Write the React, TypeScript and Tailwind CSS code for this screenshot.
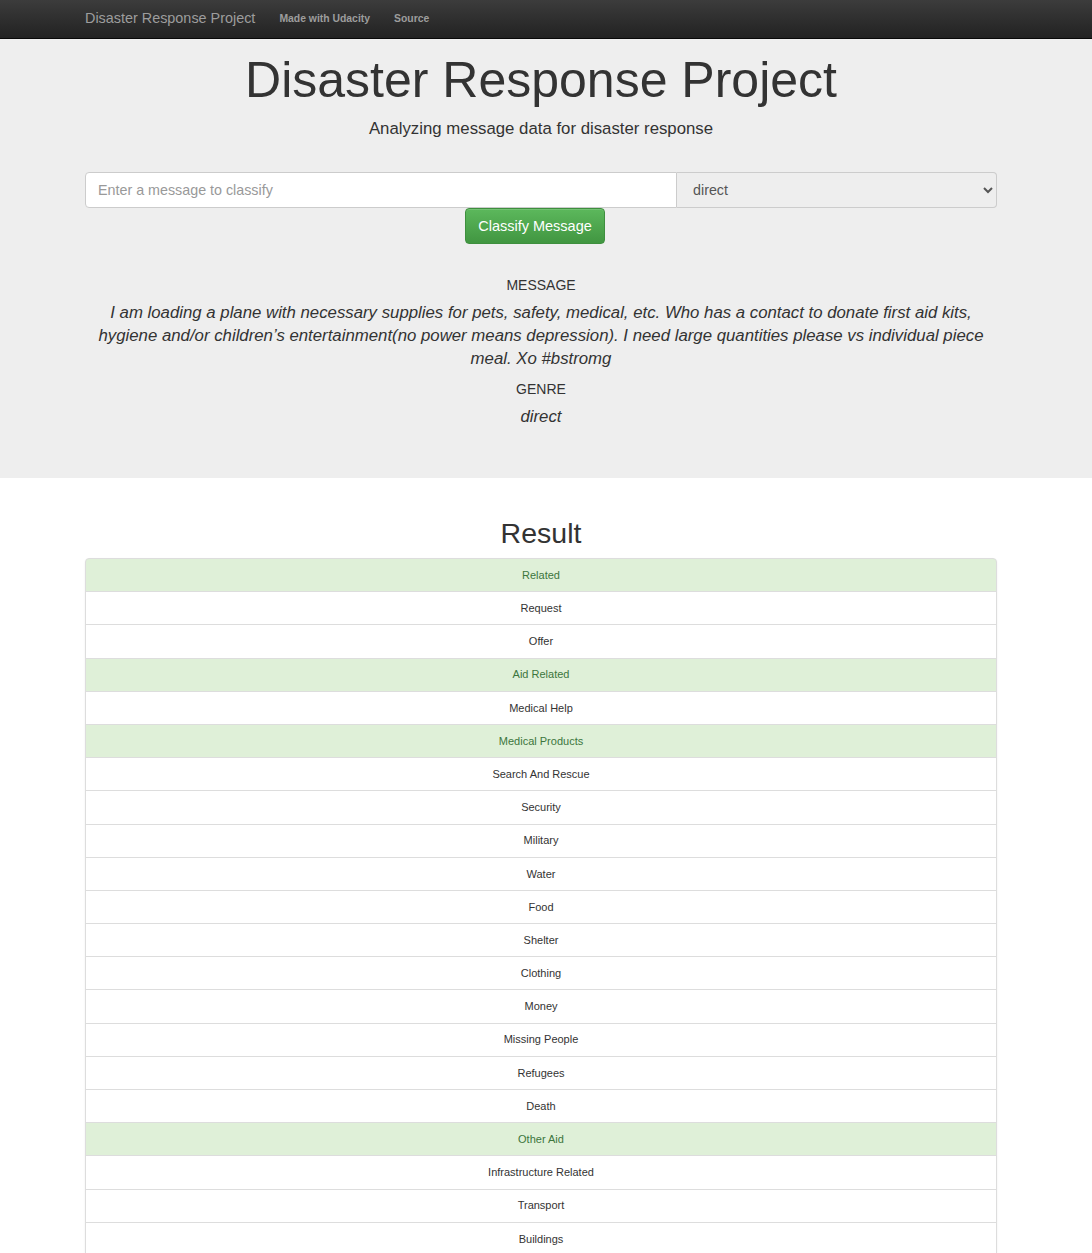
import React from 'react';

const categories: { name: string; hit: boolean }[] = [
  { name: 'Related', hit: true },
  { name: 'Request', hit: false },
  { name: 'Offer', hit: false },
  { name: 'Aid Related', hit: true },
  { name: 'Medical Help', hit: false },
  { name: 'Medical Products', hit: true },
  { name: 'Search And Rescue', hit: false },
  { name: 'Security', hit: false },
  { name: 'Military', hit: false },
  { name: 'Water', hit: false },
  { name: 'Food', hit: false },
  { name: 'Shelter', hit: false },
  { name: 'Clothing', hit: false },
  { name: 'Money', hit: false },
  { name: 'Missing People', hit: false },
  { name: 'Refugees', hit: false },
  { name: 'Death', hit: false },
  { name: 'Other Aid', hit: true },
  { name: 'Infrastructure Related', hit: false },
  { name: 'Transport', hit: false },
  { name: 'Buildings', hit: false },
];

const message =
  'I am loading a plane with necessary supplies for pets, safety, medical, etc. Who has a contact to donate first aid kits, hygiene and/or children\u2019s entertainment(no power means depression). I need large quantities please vs individual piece meal. Xo #bstromg';

const App: React.FC = () => {
  return (
    <div className="min-h-[1253px] bg-white text-[#333] font-['Liberation_Sans',Arial,sans-serif]">
      {/* navbar */}
      <nav className="h-[39px] bg-gradient-to-b from-[#3c3c3c] to-[#222] border-b border-[#080808]">
        <div className="w-[912px] ml-[85px] flex items-center h-[38px]">
          <span className="text-[14.4px] text-[#9d9d9d]">Disaster Response Project</span>
          <span className="ml-6 text-[10.4px] font-bold text-[#9d9d9d]">Made with Udacity</span>
          <span className="ml-6 text-[10.4px] font-bold text-[#9d9d9d]">Source</span>
        </div>
      </nav>

      {/* jumbotron */}
      <section className="bg-[#eee] h-[439px]">
        <div className="w-[912px] ml-[85px] pt-[10px] flex flex-col items-center">
          <h1 className="text-[50px] leading-[62px] text-[#333]">Disaster Response Project</h1>
          <p className="mt-[6px] text-[16.8px] leading-[24px] text-[#333]">
            Analyzing message data for disaster response
          </p>

          <form className="mt-[31px] w-full flex flex-col items-center">
            <div className="w-full flex h-[36px]">
              <input
                type="text"
                placeholder="Enter a message to classify"
                className="flex-1 h-full bg-white border border-[#ccc] rounded-l-[4px] px-3 text-[14.3px] text-[#555] placeholder:text-[#999] outline-none"
              />
              <select
                defaultValue="direct"
                className="w-[320px] h-full bg-[#eee] border border-l-0 border-[#ccc] rounded-r-[4px] pl-[12px] pr-2 text-[14.3px] text-[#555] outline-none"
              >
                <option value="direct">direct</option>
                <option value="news">news</option>
                <option value="social">social</option>
              </select>
            </div>
            <button
              type="button"
              className="mr-[12px] h-[36px] px-[12px] rounded-[4px] border border-[#3e8f3e] bg-gradient-to-b from-[#5cb85c] to-[#419641] text-white text-[14.5px] leading-none shadow-[inset_0_1px_0_rgba(255,255,255,0.15)]"
            >
              Classify Message
            </button>
          </form>

          <div className="mt-[31px] flex flex-col items-center text-center">
            <div className="text-[14px] leading-[20px] text-[#333]">MESSAGE</div>
            <p className="mt-[6px] w-[900px] text-[16.8px] leading-[23px] italic text-[#333]">{message}</p>
            <div className="mt-[9px] text-[14px] leading-[20px] text-[#333]">GENRE</div>
            <p className="mt-[6px] text-[16.8px] leading-[23px] italic text-[#333]">direct</p>
          </div>
        </div>
      </section>

      {/* result */}
      <section className="w-[912px] ml-[85px] pt-[35px]">
        <h2 className="text-center text-[28.5px] leading-[40px] text-[#333]">Result</h2>
        <ul className="mt-[5px] rounded-[4px] shadow-[0_1px_2px_rgba(0,0,0,0.075)]">
          {categories.map((c, i) => (
            <li
              key={c.name}
              className={
                'h-[34.2px] -mb-px flex items-center justify-center border border-[#ddd] text-[11px] ' +
                (c.hit ? 'bg-[#dff0d8] text-[#3c763d] ' : 'bg-white text-[#333] ') +
                (i === 0 ? 'rounded-t-[4px]' : '')
              }
            >
              {c.name}
            </li>
          ))}
        </ul>
      </section>
    </div>
  );
};

export default App;
